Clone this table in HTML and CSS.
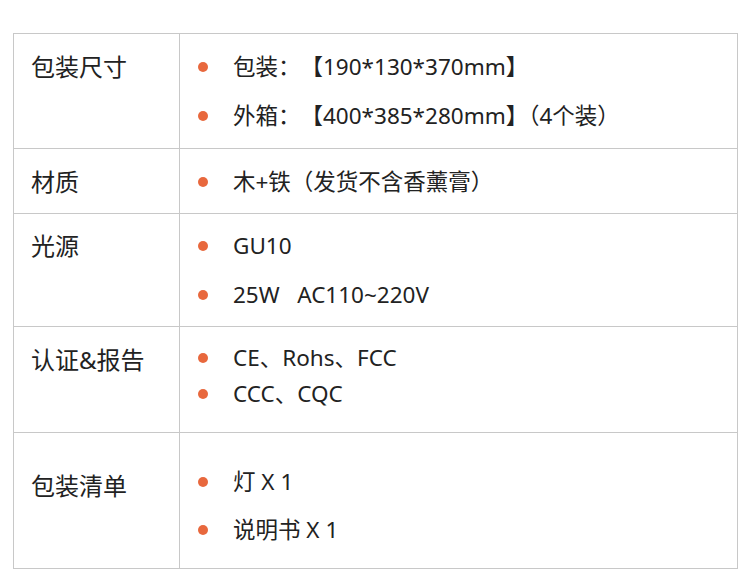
FILE: index.html
```html
<!DOCTYPE html>
<html lang="zh-CN">
<head>
<meta charset="utf-8">
<link rel="stylesheet" href="styles.css">
</head>
<body>
<div class="spec">
  <div class="row r1">
    <div class="label">包装尺寸</div>
    <ul class="items">
      <li>包装：【190*130*370mm】</li>
      <li><span>外箱：【400*385*280mm<span class="trim">】（</span>4个装）</span></li>
    </ul>
  </div>
  <div class="row r2">
    <div class="label">材质</div>
    <ul class="items">
      <li>木+铁（发货不含香薰膏）</li>
    </ul>
  </div>
  <div class="row r3">
    <div class="label">光源</div>
    <ul class="items">
      <li>GU10</li>
      <li>25W&nbsp;&nbsp; AC110~220V</li>
    </ul>
  </div>
  <div class="row r4">
    <div class="label">认证&amp;报告</div>
    <ul class="items tight">
      <li>CE、Rohs、FCC</li>
      <li>CCC、CQC</li>
    </ul>
  </div>
  <div class="row r5">
    <div class="label">包装清单</div>
    <ul class="items list5">
      <li>灯 X 1</li>
      <li>说明书 X 1</li>
    </ul>
  </div>
</div>
</body>
</html>
```

FILE: styles.css
```css
html, body {
  margin: 0;
  padding: 0;
  background: #ffffff;
}
body {
  font-family: "Noto Sans", "Noto Sans CJK SC", sans-serif;
  color: #222222;
  text-spacing-trim: space-all;
}
.trim {
  text-spacing-trim: normal;
}
.spec {
  margin: 33px 0 0 13px;
  width: 725px;
  box-sizing: border-box;
  border: 1px solid #c8c8c8;
}
.row {
  display: flex;
  border-top: 1px solid #c8c8c8;
}
.row:first-child {
  border-top: none;
}
.label {
  width: 148px;
  flex: none;
  border-right: 1px solid #c8c8c8;
  padding: 8px 0 7px 17px;
  font-size: 24px;
  line-height: 49px;
}
.items {
  list-style: none;
  margin: 0;
  padding: 8px 0 8px 18px;
  font-size: 22.5px;
  line-height: 49px;
}
.items li {
  display: flex;
  align-items: center;
  gap: 25px;
}
.items li::before {
  content: "";
  width: 10px;
  height: 10px;
  border-radius: 50%;
  background: #e8683d;
  flex: none;
}
.r2 .items {
  padding-bottom: 7px;
}
.r3 .items,
.r3 .label {
  padding-top: 7px;
  padding-bottom: 7px;
}
.r4 .items.tight {
  line-height: 36px;
  padding-top: 13px;
  padding-bottom: 20px;
}
.r5 .label {
  padding-top: 28px;
}
.r5 .items.list5 {
  padding-top: 25px;
  padding-bottom: 14px;
  line-height: 48px;
}
```
